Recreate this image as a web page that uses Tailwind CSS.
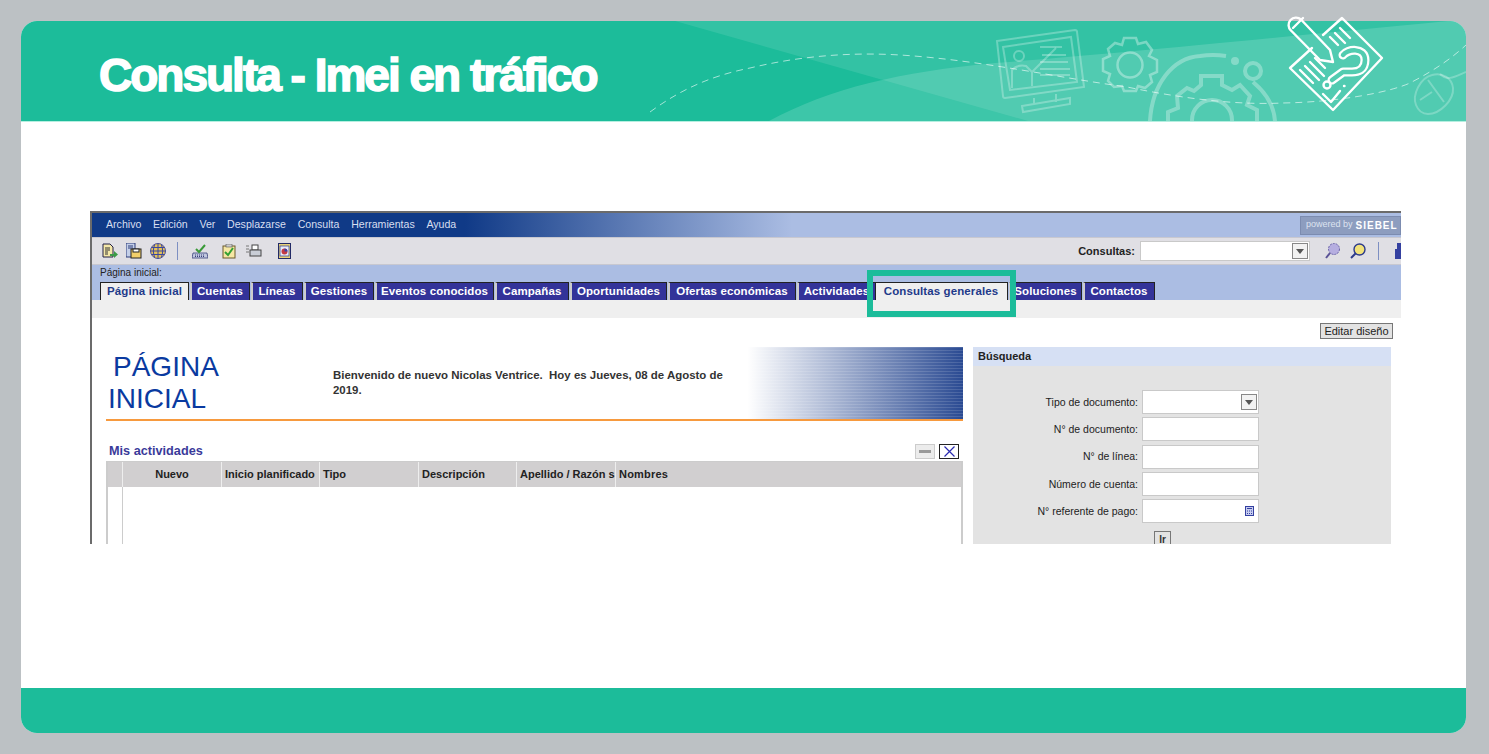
<!DOCTYPE html>
<html lang="es">
<head>
    <meta charset="UTF-8">
    <title>Consulta - Imei en tráfico</title>
    <script src="https://cdn.jsdelivr.net/npm/@tailwindcss/browser@4"></script>
</head>
<body class="w-[1489px] h-[754px] overflow-hidden bg-[#bcc1c4] pt-[21px] pb-[21px] pl-[21px] pr-[23px] font-['Liberation_Sans',Arial,sans-serif]">
<div class="relative flex flex-col h-[712px] bg-white rounded-2xl">

    <!-- header -->
    <header class="relative h-[101px] shrink-0 bg-[#1cbc9a] rounded-t-2xl border-b border-[#b5efe0] overflow-hidden">
        <svg class="absolute left-0 top-0" width="1445" height="100" viewBox="21 21 1445 100" fill="none">
            <path d="M675 21L1028 121H1466V21Z" fill="#fff" fill-opacity=".1"/>
            <path d="M769 121C830 88 900 72 995 63C1100 55 1230 42 1448 21H1466V121Z" fill="#fff" fill-opacity=".15"/>
            <path d="M650 112C680 90 710 76 750 68C800 56 850 52 900 55C980 60 1060 78 1127 87C1190 100 1240 105 1283 103C1340 102 1390 92 1410 83C1435 70 1452 58 1466 45" stroke="#fff" stroke-opacity=".6" stroke-dasharray="7 5"/>
            <!-- monitor -->
            <g stroke="#fff" stroke-opacity=".28" stroke-width="2">
                <path d="M997 41L1075 30Q1077 30 1077 32L1084 87L1005 98Q1003 98 1003 96Z"/>
                <path d="M1003 47L1071 37L1077 82L1010 90Z"/>
                <path d="M1034 98V105M1056 94V102M1022 106L1070 98V104L1023 112Z"/>
                <circle cx="1019" cy="56" r="5"/>
                <path d="M1012 88V70Q1018 64 1026 66L1032 72L1056 48M1032 72V86"/>
                <path d="M1040 47H1062M1042 55H1066M1040 62H1068M1040 69H1070M1040 75H1070"/>
            </g>
            <!-- small gear -->
            <g stroke="#fff" stroke-opacity=".35" stroke-width="2.5">
                <circle cx="1130" cy="65" r="12.500"/>
                <path d="M1124 38H1136L1138 44L1146 42L1152 50L1149 56L1157 60V72L1150 75L1152 82L1145 88L1138 86L1136 91H1124L1122 86L1114 87L1108 81L1110 74L1103 71V59L1110 56L1108 49L1115 43L1122 45Z"/>
            </g>
            <!-- big gear with ring -->
            <g stroke="#fff" stroke-opacity=".3" stroke-width="4">
                <path d="M1150 121C1152 85 1172 58 1200 56Q1213 54 1226 56"/>
                <path d="M1253 82C1265 92 1274 105 1275 121"/>
                <circle cx="1253" cy="71" r="8"/>
                <circle cx="1235" cy="61" r="2"/>
                <circle cx="1212" cy="120" r="20"/>
                <path d="M1168 121V112L1178 108L1177 96L1187 88L1194 91L1201 85V76H1222V85L1232 90L1240 85L1250 96L1247 105L1257 110V121"/>
            </g>
            <!-- mouse -->
            <g stroke="#fff" stroke-opacity=".25" stroke-width="2">
                <path d="M1416 105C1412 95 1420 78 1432 75C1442 72 1452 78 1453 88C1454 100 1440 114 1428 114C1422 114 1418 110 1416 105Z"/>
                <path d="M1428 80L1444 102M1432 92L1420 100"/>
                <path d="M1440 74C1448 82 1456 76 1466 72"/>
            </g>
        </svg>
        <h1 class="absolute left-[78px] top-[27px] text-[46px] leading-[54px] font-bold text-white tracking-[-2px] [-webkit-text-stroke:1.500px_white] font-['Liberation_Sans',Arial,sans-serif]">Consulta - Imei en tráfico</h1>
    </header>

    <!-- badge icon, pokes out above the header -->
    <svg class="absolute left-0 top-0 overflow-visible" width="1445" height="100" viewBox="21 21 1445 100" fill="none" stroke="#fff" stroke-width="2.4" stroke-linejoin="round" stroke-linecap="round">
        <path d="M1323 35L1342 18L1382 58L1333 110L1290 68L1312 48"/>
        <path d="M1301 19.500L1330 50L1333 62L1320 60L1291 30.500A7 7 0 0 1 1301 19.500Z"/>
        <path d="M1293 28L1303 18"/>
        <path d="M1330 37L1338 45M1335 33L1345 43M1340 28L1350 38"/>
        <path d="M1300 70L1313 83M1305 66L1319 80M1310 62L1324 76M1315 58L1325 68"/>
        <path d="M1343 55C1347 49 1365 47 1365 60C1365 70 1358 72 1352 72H1343L1332 80" stroke-width="9"/>
        <path d="M1343 55C1347 49 1365 47 1365 60C1365 70 1358 72 1352 72H1343L1332 80" stroke="#52ccb0" stroke-width="4.500"/>
        <circle cx="1327" cy="85" r="3.500"/>
        <path d="M1344 86H1344.500M1323 94L1331 102L1340 91"/>
    </svg>

    <!-- body -->
    <main class="flex-1 pt-[89px] pl-[69px]">
        <div class="relative w-[1311px] h-[333px] border-l-2 border-t-2 border-[#6b6b6b] overflow-hidden text-[11px] text-[#333]">

            <!-- menu bar -->
            <div class="flex items-center h-6 bg-[linear-gradient(90deg,#103a87_0,#103a87_373px,#abbde3_700px)]">
                <nav class="flex items-center gap-[11.700px] h-full w-[373px] pl-[14px] bg-[#103a87] text-[10.600px] text-[#d8dff0]">
                    <span>Archivo</span><span>Edición</span><span>Ver</span><span>Desplazarse</span><span>Consulta</span><span>Herramientas</span><span>Ayuda</span>
                </nav>
                <div class="ml-auto flex items-center h-[19px] w-[101px] overflow-hidden whitespace-nowrap pl-[5px] bg-[#8d9dbf] border border-[#7c8cb0] text-[9px] text-[#dde3f0]">powered by <b class="ml-[3px] text-[10px] tracking-[1px] text-white">SIEBEL</b></div>
            </div>

            <!-- toolbar -->
            <div class="flex items-center h-[27px] bg-[#e0dfe4] border-t border-[#c8c8d0] pl-[10px]">
                <svg width="16" height="16" viewBox="0 0 16 16"><path d="M1 1H8L11 4V14H1Z" fill="#f4e7a8" stroke="#222046"/><path d="M3 5H8M3 7H8M3 9H6M3 11H6" stroke="#333"/><path d="M8 11H12V8L16 11.500L12 15V13H8Z" fill="#3c9a47"/></svg>
                <svg class="ml-2" width="16" height="16" viewBox="0 0 16 16"><path d="M0 0H9V14H0Z" fill="#c4cfe8" stroke="#2b3a78"/><path d="M2 3H7M2 5H7" stroke="#2b3a78"/><rect x="5" y="6" width="10" height="9" fill="#f3cf6a" stroke="#222"/><rect x="7" y="6" width="6" height="3" fill="#fff" stroke="#222"/></svg>
                <svg class="ml-2" width="16" height="16" viewBox="0 0 16 16" fill="none"><circle cx="8" cy="8" r="7.500" fill="#e4c25b" stroke="#4a4f9a"/><path d="M.500 8H15.500M2 4.500H14M2 11.500H14M8 .500V15.500M4.500 2C3 6 3 10 4.500 14M11.500 2C13 6 13 10 11.500 14" stroke="#3b47a0"/></svg>
                <span class="ml-[11px] w-px h-[18px] bg-[#7d8fc2]"></span>
                <svg class="ml-[14px]" width="16" height="15" viewBox="0 0 16 15"><path d="M1 9H15L16 14H0Z" fill="#c2c8e0" stroke="#39407a" stroke-width=".8"/><path d="M3 11H13M3 12.500H13" stroke="#39407a" stroke-dasharray="1 1"/><path d="M4 5L7 8L13 1" fill="none" stroke="#3a9a38" stroke-width="2"/></svg>
                <svg class="ml-[14px]" width="14" height="15" viewBox="0 0 14 15"><rect x="1" y="2" width="12" height="12" fill="#f6e7a4" stroke="#6b5a2a"/><rect x="4" y="0" width="6" height="3" fill="#ccc" stroke="#555" stroke-width=".6"/><path d="M3 8L6 11L11 4" fill="none" stroke="#32a032" stroke-width="2"/></svg>
                <svg class="ml-[10px]" width="16" height="14" viewBox="0 0 16 14"><path d="M0 2H3M0 5H3M0 8H3" stroke="#777"/><rect x="6" y="1" width="6" height="5" fill="#fff" stroke="#444"/><rect x="4" y="6" width="11" height="6" fill="#c9cdd6" stroke="#444"/></svg>
                <svg class="ml-[16px]" width="13" height="16" viewBox="0 0 13 16"><rect x=".5" y=".5" width="12" height="15" fill="#e8d27a" stroke="#222a66"/><rect x="2" y="3" width="9" height="10" fill="#e9ecf8" stroke="#2c3a8a" stroke-width=".7"/><circle cx="6.500" cy="8.500" r="3" fill="#c43a44"/><path d="M6.500 8.500V5.500A3 3 0 0 1 9.500 8.500Z" fill="#3844a8"/></svg>

                <div class="ml-auto flex items-center">
                    <b class="mr-[5px] text-[#222]">Consultas:</b>
                    <div class="flex justify-end items-center w-[170px] h-5 bg-white border border-[#c9c9c9] pr-px">
                        <span class="flex items-center justify-center w-4 h-4 bg-[#f2f2f2] border border-[#888]"><span class="w-0 h-0 border-x-4 border-x-transparent border-t-[5px] border-t-[#555]"></span></span>
                    </div>
                    <svg class="ml-[15px]" width="16" height="16" viewBox="0 0 16 16" fill="none"><circle cx="9" cy="6" r="5.500" fill="#b6aee0" stroke="#6a62a8" stroke-dasharray="2 1"/><path d="M5 10L1 15" stroke="#5a5296" stroke-width="2"/></svg>
                    <svg class="ml-[9px]" width="16" height="16" viewBox="0 0 16 16" fill="none"><circle cx="9.500" cy="6.500" r="5.500" fill="#f2e27a" stroke="#2c3a8a" stroke-width="1.400"/><path d="M5.500 10.500L1 15" stroke="#2c3a8a" stroke-width="2"/></svg>
                    <span class="ml-3 w-px h-[18px] bg-[#7d8fc2]"></span>
                    <svg class="ml-4" width="6" height="16" viewBox="0 0 6 16"><path d="M2 0H6V16H0V6H2Z" fill="#3440a0"/></svg>
                </div>
            </div>

            <!-- tab band -->
            <div class="h-[36px] bg-[#abbde3] border-t border-[#c8c8d0]">
                <p class="h-[17px] pl-2 pt-px text-[10px] leading-[13px] text-[#222]">Página inicial:</p>
                <div class="flex h-[18px] pl-2 text-[11.500px] font-bold tracking-[.1px] text-white">
                    <span class="flex items-center justify-center w-[89px] mr-px bg-[#efefef] text-[#1f3a8a] border-t border-l border-r border-[#222]">Página inicial</span>
                    <span class="flex items-center justify-center w-[60px] mr-px pr-px bg-[#333399] border-t border-l-2 border-r border-t-[#222] border-l-[#ccc] border-r-[#222]">Cuentas</span>
                    <span class="flex items-center justify-center w-[52px] mr-px pr-px bg-[#333399] border-t border-l-2 border-r border-t-[#222] border-l-[#ccc] border-r-[#222]">Líneas</span>
                    <span class="flex items-center justify-center w-[70px] mr-px pr-px bg-[#333399] border-t border-l-2 border-r border-t-[#222] border-l-[#ccc] border-r-[#222]">Gestiones</span>
                    <span class="flex items-center justify-center w-[119px] mr-px pr-px bg-[#333399] border-t border-l-2 border-r border-t-[#222] border-l-[#ccc] border-r-[#222]">Eventos conocidos</span>
                    <span class="flex items-center justify-center w-[74px] mr-px pr-px bg-[#333399] border-t border-l-2 border-r border-t-[#222] border-l-[#ccc] border-r-[#222]">Campañas</span>
                    <span class="flex items-center justify-center w-[97px] mr-px pr-px bg-[#333399] border-t border-l-2 border-r border-t-[#222] border-l-[#ccc] border-r-[#222]">Oportunidades</span>
                    <span class="flex items-center justify-center w-[128px] mr-px pr-px bg-[#333399] border-t border-l-2 border-r border-t-[#222] border-l-[#ccc] border-r-[#222]">Ofertas económicas</span>
                    <span class="flex items-center justify-center w-[78px] pr-px bg-[#333399] border-t border-l-2 border-t-[#222] border-l-[#ccc]">Actividades</span>
                    <span class="flex items-center justify-center w-[133px] mr-px pr-px bg-[#efefef] text-[#1f3a8a] border-t border-l border-r border-[#222]">Consultas generales</span>
                    <span class="flex items-center justify-center w-[73px] mr-px pr-px bg-[#333399] border-t border-l-2 border-r border-t-[#222] border-l-[#ccc] border-r-[#222]">Soluciones</span>
                    <span class="flex items-center justify-center w-[72px] pr-px bg-[#333399] border-t border-l-2 border-r border-t-[#222] border-l-[#ccc] border-r-[#222]">Contactos</span>
                </div>
            </div>
            <div class="h-[18px] bg-[#efefef]"></div>

            <!-- page content -->
            <div class="flex justify-end h-[21px] pt-[5px] pr-2">
                <span class="flex items-center justify-center w-[73px] h-[16px] pt-px bg-[#e3e3e3] border border-[#777] text-[11px] text-[#222]">Editar diseño</span>
            </div>
            <div class="flex pl-[14px] pt-2">
                <section class="w-[857px] shrink-0">
                    <div class="flex h-[74px] border-b-2 border-[#f79a3e]">
                        <h2 class="w-[227px] pl-[2px] pt-1 text-[28px] leading-[32px] font-normal text-[#0a3aa0]"><span class="pl-[5px]">PÁGINA</span><br>INICIAL</h2>
                        <p class="w-[410px] pt-[21px] text-[11.450px] font-bold leading-[15px]">Bienvenido de nuevo Nicolas Ventrice.&nbsp; Hoy es Jueves, 08 de Agosto de 2019.</p>
                        <div class="flex-1 h-[72px] bg-[linear-gradient(90deg,#ffffff_0,#ffffff_2%,#2a4a92_100%)]">
                            <div class="h-full bg-[repeating-linear-gradient(0deg,transparent_0,transparent_2px,#ffffff22_2px,#ffffff22_3px)]"></div>
                        </div>
                    </div>
                    <div class="flex items-center justify-between h-[40px] pt-[21px] pl-[3px] pr-1">
                        <b class="pt-px text-[12.700px] text-[#3a3a9a]">Mis actividades</b>
                        <div class="flex gap-1">
                            <span class="flex items-center justify-center w-5 h-[15px] bg-[#ececec] border border-[#ccc]"><span class="w-3 h-[3px] bg-[#999]"></span></span>
                            <span class="flex items-center justify-center w-5 h-[15px] bg-white border border-[#222]">
                                <svg width="11" height="11" viewBox="0 0 11 11"><path d="M.500 .500L10.500 10.500M10.500 .500L.500 10.500" stroke="#2a2ab0" stroke-width="1.200"/></svg>
                            </span>
                        </div>
                    </div>
                    <div class="h-[86px] border-x-2 border-[#ccc]">
                        <div class="grid grid-cols-[15px_99px_98px_99px_98px_99px_1fr] h-[26px] bg-[#d1cfd0] border-t border-[#ccc] font-bold text-[#222]">
                            <span class="border-r border-[#eee]"></span>
                            <span class="flex items-center justify-center border-r border-[#eee]">Nuevo</span>
                            <span class="flex items-center pl-[3px] whitespace-nowrap border-r border-[#eee]">Inicio planificado</span>
                            <span class="flex items-center pl-[3px] border-r border-[#eee]">Tipo</span>
                            <span class="flex items-center pl-[3px] border-r border-[#eee]">Descripción</span>
                            <span class="flex items-center pl-[3px] whitespace-nowrap overflow-hidden border-r border-[#eee]">Apellido / Razón s</span>
                            <span class="flex items-center pl-[3px] tracking-[.2px]">Nombres</span>
                        </div>
                        <div class="w-[15px] h-full border-r border-[#ccc]"></div>
                    </div>
                </section>

                <aside class="ml-[10px] w-[418px] h-[200px] bg-[#e3e3e3]">
                    <h3 class="h-[19px] pl-[5px] bg-[#d6e0f4] font-bold leading-[19px] text-[#222]">Búsqueda</h3>
                    <div class="grid grid-cols-[165px_117px] items-center gap-x-[4px] gap-y-[3.300px] pt-[24px] text-[10.500px] text-[#222]">
                        <label class="pt-px text-right">Tipo de documento:</label>
                        <div class="flex justify-end items-center h-6 bg-white border border-[#c9c9c9] pr-px">
                            <span class="flex items-center justify-center w-4 h-4 bg-[#f2f2f2] border border-[#888]"><span class="w-0 h-0 border-x-4 border-x-transparent border-t-[5px] border-t-[#555]"></span></span>
                        </div>
                        <label class="pt-px text-right">N° de documento:</label>
                        <div class="h-6 bg-white border border-[#c9c9c9]"></div>
                        <label class="pt-px text-right">N° de línea:</label>
                        <div class="h-6 bg-white border border-[#c9c9c9]"></div>
                        <label class="pt-px text-right">Número de cuenta:</label>
                        <div class="h-6 bg-white border border-[#c9c9c9]"></div>
                        <label class="pt-px text-right">N° referente de pago:</label>
                        <div class="flex justify-end items-center h-6 bg-white border border-[#c9c9c9] pr-[4px]">
                            <svg width="9" height="10" viewBox="0 0 9 10"><rect x=".5" y=".5" width="8" height="9" fill="#c7cdf0" stroke="#3440a0"/><path d="M2 2.500H7" stroke="#3440a0"/><path d="M2 5H7M2 7.500H7" stroke="#3440a0" stroke-dasharray="1 1"/></svg>
                        </div>
                    </div>
                    <div class="pl-[181px] pt-2">
                        <span class="flex items-center justify-center w-[17px] h-[17px] bg-[#e3e3e3] border border-[#777] font-bold text-[10px] text-[#333]">Ir</span>
                    </div>
                </aside>
            </div>

            <!-- green highlight on the tab -->
            <div class="absolute left-[775px] top-[57px] w-[149px] h-[47px] border-[6px] border-[#1cbc9a]"></div>
        </div>
    </main>

    <footer class="h-[45px] shrink-0 bg-[#1cbc9a] rounded-b-2xl"></footer>
</div>
</body>
</html>
